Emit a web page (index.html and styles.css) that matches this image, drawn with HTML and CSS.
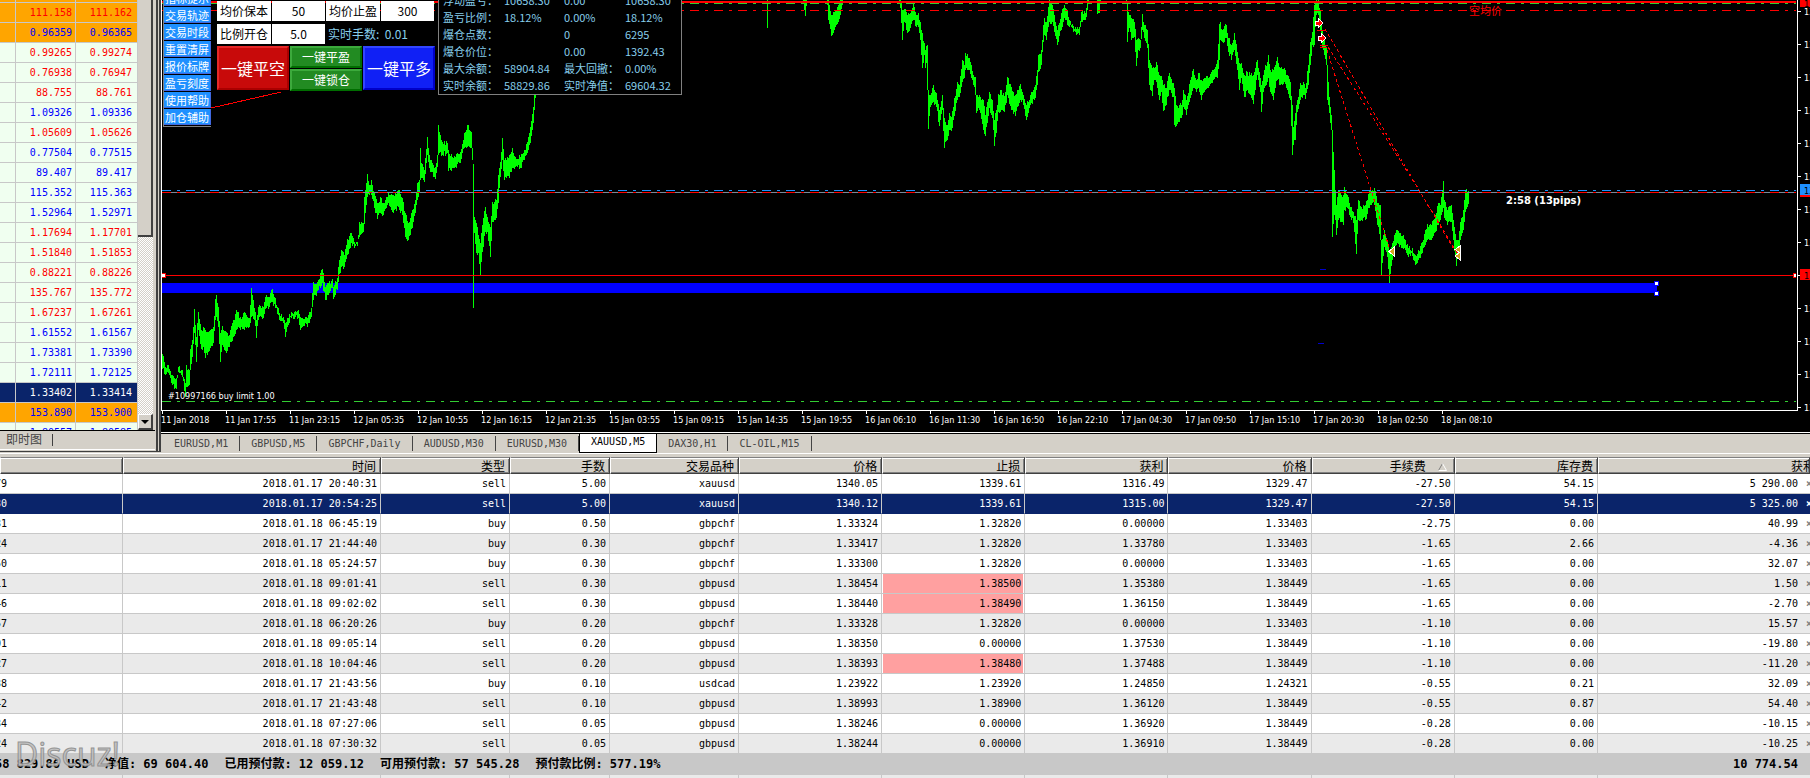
FILE: index.html
```html
<!DOCTYPE html>
<html lang="zh-CN">
<head>
<meta charset="utf-8">
<title>XAUUSD,M5</title>
<link rel="stylesheet" href="styles.css">
</head>
<body>
<main class="terminal">
  <div class="workspace">
    <aside class="market">
      <div class="market-body">
        <table class="quotes"><tbody id="quotes"></tbody></table>
        <div class="scrollbar">
          <div class="thumb"></div>
          <div class="track"></div>
          <button class="arrow" type="button" aria-label="向下滚动"><svg width="8" height="4"><path d="M0 0H8L4 4Z"/></svg></button>
        </div>
      </div>
      <div class="market-tabs"><button class="market-tab" type="button">即时图</button></div>
    </aside>

    <section class="chart-window">
      <div class="chart">
        <div class="plot">
          <svg class="canvas" id="canvas" width="100%" height="411">
            <rect class="zone" x="1" y="283" width="1495" height="10"/>
            <path id="bars" class="bars"/>
            <line class="stop" x1="0" x2="100%" y1="2" y2="2"/>
            <line class="dash lime" x1="1" x2="100%" y1="3.5" y2="3.5"/>
            <line class="dash red" x1="1" x2="100%" y1="10.5" y2="10.5"/>
            <line class="dash sky" x1="1" x2="100%" y1="190.5" y2="190.5"/>
            <line class="bid" x1="1" x2="100%" y1="192.5" y2="192.5"/>
            <line class="dash red" x1="1" x2="100%" y1="192.5" y2="192.5"/>
            <line class="level" x1="1" x2="100%" y1="275.5" y2="275.5"/>
            <line class="dash lime" x1="1" x2="100%" y1="401.5" y2="401.5"/>
            <path class="level" d="M50 108L120 92"/>
            <path class="trend" d="M1164 29L1258 190L1292 248M1167 47L1258 190L1297 254M1166 50L1210 190L1229 250"/>
            <path class="level" d="M1156 30.5h9M1159 45.5h8M1159 47.5h7"/>
            <path class="order" d="M1154 21h3v-3l5 5l-5 5v-3h-3zM1157 36h3v-3l5 5l-5 5v-3h-3z"/>
            <path class="close" d="M1233 247v9l-5-4.5zM1299 246v7l-5-3.5zM1299 252v8l-5-4z"/>
            <path class="mark" d="M1159 269.5h6M1157 343.5h6"/>
            <rect class="grip red-grip" x=".5" y="273.5" width="4" height="4"/>
            <rect class="grip red-grip" x="1632" y="273.5" width="4" height="4"/>
            <rect class="grip blue-grip" x="1493" y="281.5" width="4" height="4"/>
            <rect class="grip blue-grip" x="1493" y="291.5" width="4" height="4"/>
            <text class="average" x="1308" y="15">空均价</text>
            <text class="countdown" x="1345" y="204">2:58 (13pips)</text>
            <text class="pending" x="7" y="399">#10997166 buy limit 1.00</text>
          </svg>

          <nav class="menu">
            <button type="button">指标提示</button>
            <button type="button">交易轨迹</button>
            <button type="button">交易时段</button>
            <button type="button">重置清屏</button>
            <button type="button">报价标牌</button>
            <button type="button">盈亏刻度</button>
            <button type="button">使用帮助</button>
            <button type="button">加仓辅助</button>
          </nav>

          <form class="trade">
            <div class="fields">
              <label for="keep">均价保本</label><input id="keep" value="50">
              <label for="profit">均价止盈</label><input id="profit" value="300">
              <label for="ratio">比例开仓</label><input id="ratio" value="5.0">
              <output>实时手数:&nbsp; 0.01</output>
            </div>
            <div class="actions">
              <button class="big sell" type="button">一键平空</button>
              <div class="pair">
                <button class="small" type="button">一键平盈</button>
                <button class="small" type="button">一键锁仓</button>
              </div>
              <button class="big buy" type="button">一键平多</button>
            </div>
          </form>

          <div class="account">
            <span>浮动盈亏：</span><span>10658.30</span><span>0.00</span><span>10658.30</span>
            <span>盈亏比例：</span><span>18.12%</span><span>0.00%</span><span>18.12%</span>
            <span>爆仓点数：</span><span></span><span>0</span><span>6295</span>
            <span>爆仓价位：</span><span></span><span>0.00</span><span>1392.43</span>
            <span>最大余额：</span><span>58904.84</span><span>最大回撤：</span><span>0.00%</span>
            <span>实时余额：</span><span>58829.86</span><span>实时净值：</span><span>69604.32</span>
          </div>
        </div>
        <div class="scale">
          <svg width="12" height="411">
            <path id="ticks" class="ticks"/>
            <g id="prices" class="prices"></g>
            <rect class="tag-red" x="2" y="0" width="11" height="7"/><text class="tag" x="6" y="7">13</text>
            <rect class="tag-blue" x="2" y="184" width="11" height="11"/><rect class="tag-red" x="2" y="195" width="11" height="2"/><text class="tag" x="6" y="194">13</text>
            <rect class="tag-red" x="2" y="269" width="11" height="11"/><text class="tag" x="6" y="279">13</text>
          </svg>
        </div>
      </div>
      <div class="times" id="times"></div>
      <div class="chart-tabs">
        <button type="button">EURUSD,M1</button>
        <button type="button">GBPUSD,M5</button>
        <button type="button">GBPCHF,Daily</button>
        <button type="button">AUDUSD,M30</button>
        <button type="button">EURUSD,M30</button>
        <button class="active" type="button">XAUUSD,M5</button>
        <button type="button">DAX30,H1</button>
        <button type="button">CL-OIL,M15</button>
      </div>
    </section>
  </div>

  <section class="orders">
    <table class="trades">
      <colgroup>
        <col class="c-id"><col class="c-time"><col class="c-type"><col class="c-lots"><col class="c-type"><col class="c-num"><col class="c-num"><col class="c-num"><col class="c-num"><col class="c-num"><col class="c-num"><col><col class="c-close">
      </colgroup>
      <thead>
        <tr><th></th><th>时间</th><th>类型</th><th>手数</th><th>交易品种</th><th>价格</th><th>止损</th><th>获利</th><th>价格</th><th>手续费<svg class="sort" width="9" height="8"><path d="M.5 7.5L4.5 .5"/><path class="lit" d="M4.5 .5L8.5 7.5H.5"/></svg></th><th>库存费</th><th colspan="2"><span class="cut">获利</span></th></tr>
      </thead>
      <tbody id="trades"></tbody>
    </table>
    <footer class="summary">
      <span class="balance">58 829.86 USD</span><span>净值: 69 604.40</span><span>已用预付款: 12 059.12</span><span>可用预付款: 57 545.28</span><span>预付款比例: 577.19%</span>
      <strong class="total">10 774.54</strong>
    </footer>
    <table class="trades">
      <colgroup>
        <col class="c-id"><col class="c-time"><col class="c-type"><col class="c-lots"><col class="c-type"><col class="c-num"><col class="c-num"><col class="c-num"><col class="c-num"><col class="c-num"><col class="c-num"><col>
      </colgroup>
      <tbody><tr class="spare"><td></td><td></td><td></td><td></td><td></td><td></td><td></td><td></td><td></td><td></td><td></td><td></td></tr></tbody>
    </table>
    <div class="watermark">Discuz!</div>
  </section>
</main>
<script src="app.js"></script>
</body>
</html>
```

FILE: styles.css
```css
* { box-sizing: border-box; }
body { margin: 0; background: #fff; color: #000; font: 10px/20px "DejaVu Sans Mono", "Noto Sans CJK SC", monospace; }
button, input { margin: 0; padding: 0; border: 0; border-radius: 0; background: none; font: inherit; color: inherit; }
.terminal { height: 100vh; overflow: hidden; background: #d4d0c8; }
.workspace { display: flex; height: 453px; }

.market { flex: none; width: 161px; height: 452px; border-right: 5px double #404040; padding-right: 1px; border-bottom: 1px solid #404040; }
.market-body { display: flex; height: 431px; border-bottom: 1px solid #000; overflow: hidden; }
.quotes { width: 138px; height: 443px; border-collapse: separate; border-spacing: 0; table-layout: fixed; text-align: right; }
.quotes td { height: 20px; padding: 0 3px 0 0; line-height: 19px; border-right: 1px solid #c8c8c8; border-bottom: 1px solid #c8c8c8; background: #f0fff0; }
.quotes td:first-child { width: 16px; }
.quotes td:nth-child(2) { width: 60px; }
.quotes td:last-child { padding-right: 5px; }
.quotes .strip td { height: 3px; }
.quotes .up { color: #00f; }
.quotes .down { color: #f00; }
.quotes .hot td { background: #ffa500; }
.quotes .picked td { background: #0a246a; color: #fff; }
.scrollbar { display: flex; flex: none; flex-direction: column; width: 15px; height: 430px; }
.thumb { height: 237px; border-right: 2px solid #404040; border-bottom: 2px solid #404040; }
.track { flex: 1; background: repeating-conic-gradient(#fff 0 25%, #d4d0c8 0 50%) 0 0 / 2px 2px; }
.arrow { display: grid; place-items: center; height: 16px; border: 1px solid #fff; border-right: 2px solid #404040; border-bottom: 2px solid #404040; background: #d4d0c8; }
.market-tabs { height: 19px; border-bottom: 1px solid #fff; }
.market-tab { height: 12px; padding: 0 10px 0 6px; border-right: 1px solid #404040; font-size: 12px; line-height: 12px; color: #444; }

.chart-window { flex: 1; min-width: 0; display: flex; flex-direction: column; }
.chart { display: flex; background: #000; }
.plot { position: relative; flex: 1; min-width: 0; border-left: 1px solid #fff; border-bottom: 1px solid #fff; height: 411px; overflow: hidden; }
.canvas { display: block; margin-left: -1px; shape-rendering: crispEdges; }
.scale { flex: none; width: 13px; border-left: 1px solid #fff; }
.scale svg { display: block; }
.zone { fill: #00f; }
.bars { stroke: #0f0; fill: none; }
.stop { stroke: #f00; stroke-width: 2; }
.level { stroke: #f00; fill: none; }
.bid { stroke: #789; }
.dash { stroke-dasharray: 9 6 3 6; }
.lime { stroke: #32cd32; }
.red { stroke: #f00; }
.sky { stroke: #1e90ff; }
.trend { stroke: #f00; fill: none; stroke-dasharray: 3 3; }
.order { fill: #f00; stroke: #fff; }
.close { fill: #daa520; stroke: #fff; }
.mark { stroke: #00c; }
.grip { fill: #fff; }
.red-grip { stroke: #f00; }
.blue-grip { stroke: #00f; }
.average { fill: #f00; font: 11px "Noto Sans CJK SC", sans-serif; }
.countdown { fill: #fff; font: bold 10px "DejaVu Sans", sans-serif; }
.pending { fill: #fff; font: 9px "DejaVu Sans Condensed", "DejaVu Sans", sans-serif; }
.ticks { stroke: #fff; }
.prices, .tag { fill: #fff; font: 9px "DejaVu Sans Condensed", "DejaVu Sans", sans-serif; }
.tag { fill: #000; }
.tag-red { fill: #f00; }
.tag-blue { fill: #1e90ff; }

.menu { position: absolute; left: 1px; top: -10px; display: flex; flex-direction: column; gap: 1px; padding-bottom: 1px; border-left: 1px solid #808080; border-bottom: 1px solid #808080; background: #000; }
.menu button { width: 47px; height: 16px; border-right: 1px solid #4169e1; border-bottom: 1px solid #4169e1; background: #1e90ff; color: #fff; font: 11px/14px "Noto Sans CJK SC", sans-serif; }
.trade { position: absolute; left: 55px; top: 1px; width: 219px; }
.fields { display: grid; grid-template-columns: 54px 53px 54px 53px; gap: 3px 1px; font: 12px/20px "Noto Sans CJK SC", sans-serif; }
.fields label, .fields input { height: 20px; background: #fff; text-align: center; color: #000; width: 100%; }
.fields output { grid-column: span 2; padding-left: 2px; color: #87ceeb; white-space: nowrap; }
.actions { display: flex; gap: 1px; margin-top: 2px; font-family: "Noto Sans CJK SC", sans-serif; color: #fff; }
.big { width: 72px; height: 44px; font-size: 16px; border: 2px solid; }
.sell { background: #c80a0a; border-color: #e62828 #aa0000 #aa0000 #e62828; }
.buy { background: #1020f5; border-color: #3246ff #0000c8 #0000c8 #3246ff; }
.pair { display: flex; flex-direction: column; gap: 1px; }
.small { width: 72px; height: 22px; font-size: 12px; line-height: 18px; border: 2px solid; border-color: #3caa3c #006e00 #006e00 #3caa3c; background: #228b22; }
.account { position: absolute; left: 276px; top: -9px; display: grid; grid-template-columns: 61px 60px 61px 56px; grid-auto-rows: 17px; width: 244px; padding-left: 4px; border: 1px solid #808080; background: #000; color: #87ceeb; font: 11px/17px "Noto Sans CJK SC", sans-serif; white-space: nowrap; }

.times { display: flex; height: 21px; overflow: hidden; background: #000; color: #fff; font: 9px/18px "DejaVu Sans Condensed", "DejaVu Sans", sans-serif; white-space: nowrap; }
.times span { flex: none; width: 64px; background: linear-gradient(#fff, #fff) 1px 0 / 1px 3px no-repeat; }
.chart-tabs { display: flex; align-items: flex-start; height: 21px; padding-left: 2px; border-top: 1px solid #fff; box-shadow: inset 0 1px #000; color: #444; }
.chart-tabs button { height: 15px; margin-top: 3px; padding: 0 11px; border-right: 1px solid #444; line-height: 10px; }
.chart-tabs .active { height: 19px; margin-top: 1px; border: 1px solid #000; border-top: 0; background: #fff; color: #000; line-height: 14px; padding-bottom: 3px; }

.orders { position: relative; border-top: 1px solid #fff; padding-top: 3px; }
.trades { width: 100%; table-layout: fixed; border-collapse: separate; border-spacing: 0; text-align: right; background: #fff; white-space: nowrap; }
.c-id { width: 6.8%; }
.c-time { width: 14.25%; }
.c-type { width: 7.13%; }
.c-lots { width: 5.52%; }
.c-num { width: 7.91%; }
.c-close { width: 4px; }
.trades th { height: 17px; padding: 0 4px 0 0; border: 1px solid; border-color: #808080 #404040 #404040 #fff; background: #d4d0c8; box-shadow: inset 0 1px #fff, inset -1px -1px #808080; font: 12px/14px "Noto Sans CJK SC", sans-serif; text-align: right; overflow: hidden; }
.trades td { height: 20px; padding: 1px 3px 0 0; border-right: 1px solid #c8c8c8; border-bottom: 1px solid #c8c8c8; line-height: 18px; overflow: hidden; }
.trades td:first-child { text-align: left; text-indent: -5px; }
.trades td:nth-child(12) { border-right: 0; padding-right: 8px; }
.trades td:nth-child(13) { border-right: 0; padding: 0; text-align: left; color: #808080; font-weight: bold; }
.trades tr:nth-child(even) { background: #eaeaea; }
.trades .chosen td { background: #0a246a; border-bottom-color: #0a246a; color: #fff; }
.trades .near td:nth-child(7) { background: #ffa0a0; box-shadow: inset 1px 0 #fff, inset -1px 0 #fff; }
.trades .spare { background: #eaeaea; }
.sort { margin: 0 3px 0 12px; fill: none; stroke: #808080; }
.sort .lit { stroke: #fff; }
.cut { margin-right: -10px; }
.summary { display: flex; gap: 16px; height: 21px; padding-right: 12px; background: #c8c8c8; font-size: 12px; font-weight: bold; line-height: 20px; white-space: nowrap; overflow: hidden; }
.balance { margin-left: -5px; }
.total { margin-left: auto; }
.watermark { position: absolute; left: 15px; top: 278px; color: #c0c0c0; font: 32px/44px "Open Sans", sans-serif; -webkit-text-stroke: 1px #8c8c8c; opacity: .9; }
```

FILE: app.js
```js
const byId = id => document.getElementById(id);

// bid, ask, row style
const quotes = [
  ['111.158', '111.162', 'down hot'], ['0.96359', '0.96365', 'up hot'],
  ['0.99265', '0.99274', 'down'], ['0.76938', '0.76947', 'down'], ['88.755', '88.761', 'down'],
  ['1.09326', '1.09336', 'up'], ['1.05609', '1.05626', 'down'], ['0.77504', '0.77515', 'up'],
  ['89.407', '89.417', 'up'], ['115.352', '115.363', 'up'], ['1.52964', '1.52971', 'up'],
  ['1.17694', '1.17701', 'down'], ['1.51840', '1.51853', 'down'], ['0.88221', '0.88226', 'down'],
  ['135.767', '135.772', 'down'], ['1.67237', '1.67261', 'down'], ['1.61552', '1.61567', 'up'],
  ['1.73381', '1.73390', 'up'], ['1.72111', '1.72125', 'up'], ['1.33402', '1.33414', 'picked'],
  ['153.890', '153.900', 'up hot'], ['1.80557', '1.80585', 'up']
];
byId('quotes').innerHTML = '<tr class="strip hot"><td></td><td></td><td></td></tr>' +
  quotes.map(q => `<tr class="${q[2]}"><td></td><td>${q[0]}</td><td>${q[1]}</td></tr>`).join('');

const trades = `79|2018.01.17 20:40:31|sell|5.00|xauusd|1340.05|1339.61|1316.49|1329.47|-27.50|54.15|5 290.00
30|2018.01.17 20:54:25|sell|5.00|xauusd|1340.12|1339.61|1315.00|1329.47|-27.50|54.15|5 325.00
31|2018.01.18 06:45:19|buy|0.50|gbpchf|1.33324|1.32820|0.00000|1.33403|-2.75|0.00|40.99
24|2018.01.17 21:44:40|buy|0.30|gbpchf|1.33417|1.32820|1.33780|1.33403|-1.65|2.66|-4.36
50|2018.01.18 05:24:57|buy|0.30|gbpchf|1.33300|1.32820|0.00000|1.33403|-1.65|0.00|32.07
11|2018.01.18 09:01:41|sell|0.30|gbpusd|1.38454|1.38500|1.35380|1.38449|-1.65|0.00|1.50
46|2018.01.18 09:02:02|sell|0.30|gbpusd|1.38440|1.38490|1.36150|1.38449|-1.65|0.00|-2.70
57|2018.01.18 06:20:26|buy|0.20|gbpchf|1.33328|1.32820|0.00000|1.33403|-1.10|0.00|15.57
01|2018.01.18 09:05:14|sell|0.20|gbpusd|1.38350|0.00000|1.37530|1.38449|-1.10|0.00|-19.80
27|2018.01.18 10:04:46|sell|0.20|gbpusd|1.38393|1.38480|1.37488|1.38449|-1.10|0.00|-11.20
38|2018.01.17 21:43:56|buy|0.10|usdcad|1.23922|1.23920|1.24850|1.24321|-0.55|0.21|32.09
42|2018.01.17 21:43:48|sell|0.10|gbpusd|1.38993|1.38900|1.36120|1.38449|-0.55|0.87|54.40
34|2018.01.18 07:27:06|sell|0.05|gbpusd|1.38246|0.00000|1.36920|1.38449|-0.28|0.00|-10.15
24|2018.01.18 07:30:32|sell|0.05|gbpusd|1.38244|0.00000|1.36910|1.38449|-0.28|0.00|-10.25`;
const rowStyle = { 1: 'chosen', 5: 'near', 6: 'near', 9: 'near' };
byId('trades').innerHTML = trades.split('\n').map((row, i) =>
  `<tr class="${rowStyle[i] || ''}">${row.split('|').map(v => `<td>${v}</td>`).join('')}<td>×</td></tr>`).join('');

byId('times').innerHTML = ['11 Jan 2018', '11 Jan 17:55', '11 Jan 23:15', '12 Jan 05:35', '12 Jan 10:55',
  '12 Jan 16:15', '12 Jan 21:35', '15 Jan 03:55', '15 Jan 09:15', '15 Jan 14:35', '15 Jan 19:55',
  '16 Jan 06:10', '16 Jan 11:30', '16 Jan 16:50', '16 Jan 22:10', '17 Jan 04:30', '17 Jan 09:50',
  '17 Jan 15:10', '17 Jan 20:30', '18 Jan 02:50', '18 Jan 08:10'].map(t => `<span>${t}</span>`).join('');

let ticks = '', prices = '';
for (let y = 11; y < 410; y += 33) {
  ticks += `M0 ${y + .5}h3`;
  if (y !== 275) prices += `<text x="6" y="${y + 4}">13</text>`;
}
byId('ticks').setAttribute('d', ticks);
byId('prices').innerHTML = prices;

// Price envelope: x, high, low. One bar per pixel is interpolated between the points.
const shape = `162 354 369,165 367 375,168 365 373,172 375 385,176 378 389,178 367 372,182 370 377,185 383 397,186 365 387,189 373 385,190 349 370,192 340 357,194 309 333,196 337 362,198 312 330,201 330 349,203 327 347,205 330 358,208 332 352,213 327 343,215 299 320,216 295 317,218 307 327,220 333 362,222 326 345,226 332 353,229 335 347,233 320 337,236 310 330,240 317 330,245 313 327,249 318 327,251 288 317,254 308 320,256 320 338,258 307 320,263 307 318,266 295 308,269 297 307,272 289 302,275 298 308,279 313 320,283 317 323,285 323 337,287 318 327,291 312 318,298 310 318,300 317 330,305 317 323,307 318 327,311 308 317,313 282 300,318 280 290,322 269 283,325 287 300,328 283 295,332 279 288,333 287 299,337 278 290,338 267 282,341 250 267,344 255 267,347 239 255,351 233 243,354 242 248,357 242 246,359 222 237,363 223 232,364 197 224,367 174 197,369 185 195,371 180 195,374 193 208,377 203 219,380 197 213,383 203 215,388 192 203,393 195 213,398 190 207,402 198 215,405 213 237,408 223 240,412 210 228,415 200 213,417 183 200,419 180 192,420 148 180,421 163 178,424 170 182,427 137 155,429 155 168,435 167 179,437 155 167,438 125 155,442 142 155,447 143 153,448 150 171,453 158 168,460 152 163,464 133 148,467 125 147,471 132 148,472 148 160,473 164 308,474 217 233,476 223 253,478 235 253,480 243 275,482 225 252,485 207 232,487 217 232,490 227 257,492 202 222,496 200 218,498 175 203,500 162 177,502 138 160,504 160 180,509 155 178,512 148 168,515 157 167,520 157 168,524 150 160,527 142 153,530 127 143,533 107 123,534 95 110,536 60 90,540 -20 10,541 -30 -20;
767 0 28;803 -4 4,804 0 10,805 0 16,806 -2 6;827 -5 5,828 0 20,831 15 36,834 12 30,838 5 22,842 -2 5;
899 -8 2,900 -5 8,902 10 40,904 9 22,907 15 33,910 13 28,913 3 20,916 15 27,918 13 27,920 22 40,922 33 68,924 43 55,925 50 68,927 45 57,928 90 129,930 95 107,933 85 102,936 93 107,939 110 126,942 95 110,944 118 148,947 125 140,949 113 130,951 117 131,954 98 116,957 82 100,959 85 97,962 60 82,964 65 78,965 53 70,969 58 70,973 75 85,975 77 90,976 95 113,979 95 110,983 100 130,985 115 136,989 92 108,992 100 118,994 120 146,996 110 133,998 94 112,1001 90 110,1004 96 112,1007 77 95,1011 87 110,1015 95 116,1018 90 106,1020 84 100,1023 95 105,1026 105 120,1030 95 105,1035 85 98,1037 70 85,1038 55 72,1041 50 65,1043 25 42,1044 18 35,1046 22 40,1049 0 22,1052 5 22,1055 22 36,1057 30 45,1061 13 30,1064 5 18,1067 10 25,1069 20 27,1073 26 32,1079 27 35,1081 12 22,1085 13 20,1087 -2 10,1090 -10 -3;1097 -2 14,1098 -2 13,1099 -4 13,1100 -5 4;1126 -8 0,1127 3 42,1129 15 28,1131 18 40,1134 22 37,1136 40 66,1138 38 50,1140 40 48,1142 14 30,1144 25 38,1147 30 48,1149 60 85,1152 68 96,1154 68 80,1156 62 82,1159 75 100,1161 76 92,1163 85 111,1166 88 105,1169 73 90,1173 83 97,1174 88 125,1176 105 126,1178 108 122,1182 100 115,1183 90 107,1186 100 115,1190 80 98,1193 69 88,1196 80 92,1198 73 88,1201 80 100,1204 78 92,1208 78 88,1213 70 80,1217 60 78,1219 24 60,1220 22 40,1222 30 42,1226 25 38,1228 38 52,1231 45 60,1234 33 50,1237 52 70,1239 63 90,1241 63 78,1244 75 97,1247 72 90,1250 75 95,1253 75 104,1255 68 90,1257 60 75,1260 78 92,1261 85 112,1263 75 92,1268 55 78,1270 70 92,1273 70 100,1275 65 88,1277 57 80,1280 68 85,1284 68 82,1287 75 90,1290 82 100,1292 105 155,1293 127 145,1295 113 140,1297 100 112,1300 83 100,1303 82 95,1305 88 99,1308 65 85,1310 42 65,1312 32 45,1314 5 45,1316 0 15,1318 0 15,1320 10 30,1322 30 48,1324 38 55,1326 48 65,1327 65 100,1329 97 113,1331 115 130,1332 130 237,1334 170 215,1335 190 220,1336 205 235,1338 190 220,1341 195 222,1343 195 225,1344 187 210,1347 195 208,1350 207 217,1353 212 223,1356 220 254,1358 200 220,1361 207 220,1365 205 220,1369 190 208,1372 190 203,1374 188 205,1377 203 225,1380 205 235,1381 240 275,1384 230 247,1387 240 257,1389 250 283,1392 243 260,1396 230 245,1400 233 245,1405 240 250,1408 248 257,1412 248 256,1415 255 265,1418 250 260,1422 242 253,1425 230 245,1427 224 240,1431 225 240,1435 215 232,1438 203 225,1440 205 220,1443 181 208,1444 200 218,1447 210 225,1451 205 222,1453 220 240,1456 240 266,1458 240 255,1460 222 240,1463 210 230,1465 190 212,1468 191 204`;
const plotLeft = 161;
let seed = 7;
const noise = () => (seed = (seed * 16807) % 2147483647) / 2147483647;
let bars = '';
const bar = (x, high, low) => { bars += `M${x - plotLeft + .5} ${Math.round(high)}V${Math.round(low)}`; };
shape.split(';').forEach(run => {
  const points = run.trim().split(',').map(p => p.split(' ').map(Number));
  points.forEach(([x, high, low], i) => {
    const next = points[i + 1];
    const gap = x === 472 || x === 473;
    if (next && !gap && next[0] === x + 1) {
      bar(x, Math.min(high, next[2]), Math.max(low, next[1]));
    } else {
      bar(x, high, low);
    }
    if (!next) return;
    for (let k = x + 1; k < next[0]; k++) {
      const t = (k - x) / (next[0] - x);
      const a = high + (next[1] - high) * t, b = low + (next[2] - low) * t;
      bar(k, a - 2 + noise() * 5, b + 2 - noise() * 5);
    }
  });
});
byId('bars').setAttribute('d', bars);
```
